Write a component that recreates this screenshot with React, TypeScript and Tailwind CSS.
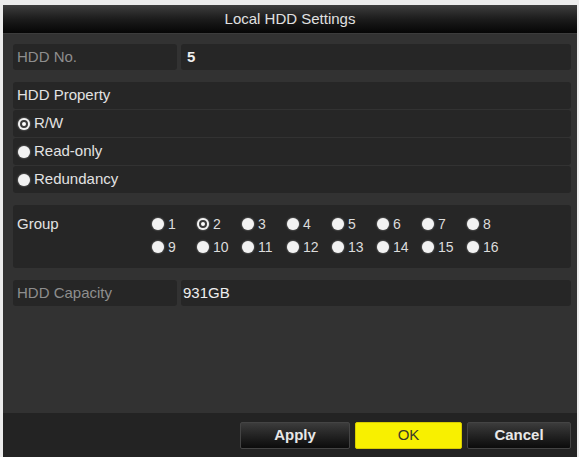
import React from "react";

const font = { fontFamily: '"Liberation Sans", Arial, sans-serif' };

const Radio = ({ checked }: { checked?: boolean }) => (
  <span className="flex h-[12px] w-[12px] shrink-0 items-center justify-center rounded-full bg-[#f2f2f2] shadow-[0_0_2px_rgba(255,255,255,0.6)]">
    {checked ? <span className="h-[8px] w-[8px] rounded-full border-2 border-[#3a3a3a] bg-white" /> : null}
  </span>
);

const Cell = ({ className = "", children }: { className?: string; children?: React.ReactNode }) => (
  <div className={`flex items-center rounded-[3px] bg-[#262626] ${className}`}>{children}</div>
);

const properties = [
  { label: "R/W", checked: true },
  { label: "Read-only", checked: false },
  { label: "Redundancy", checked: false },
];

const groups = Array.from({ length: 16 }, (_, i) => i + 1);

export default function App() {
  return (
    <div className="h-[457px] w-[579px] bg-[#ececec] pl-[3px] pr-[2px] pt-[5px]" style={font}>
      <div className="flex h-full flex-col bg-[#323232]">
        <div className="flex h-[29px] items-center justify-center border-b border-[#3c3c3c] bg-gradient-to-b from-[#3e3e3e] via-[#1c1c1c] to-[#060606] text-[15px] text-[#e0e0e0]">
          Local HDD Settings
        </div>

        <div className="flex flex-1 flex-col pl-[10px] pr-[6px] pt-[10px]">
          <div className="flex h-[26px] gap-[4px]">
            <Cell className="w-[164px] pl-[4px] text-[15px] text-[#8e8e8e]">HDD No.</Cell>
            <Cell className="flex-1 pl-[6px] text-[15px] font-bold text-[#eeeeee]">5</Cell>
          </div>

          <div className="mt-[12px] flex flex-col gap-[1px]">
            <Cell className="h-[27px] pl-[4px] text-[15px] text-[#e2e2e2]">HDD Property</Cell>
            {properties.map((p) => (
              <Cell key={p.label} className="h-[27px] gap-[4px] pl-[5px] text-[15px] text-[#e2e2e2]">
                <Radio checked={p.checked} />
                {p.label}
              </Cell>
            ))}
          </div>

          <Cell className="mt-[12px] h-[63px] items-start pl-[4px] pt-[11px] text-[15px] text-[#e2e2e2]">
            <span className="w-[135px] leading-[16px]">Group</span>
            <div className="grid grid-cols-[repeat(8,45px)] gap-y-[7px]">
              {groups.map((g) => (
                <span key={g} className="flex h-[16px] items-center gap-[4px] text-[14px] text-[#dcdcdc]">
                  <Radio checked={g === 2} />
                  {g}
                </span>
              ))}
            </div>
          </Cell>

          <div className="mt-[12px] flex h-[26px] gap-[4px]">
            <Cell className="w-[164px] pl-[4px] text-[15px] text-[#8e8e8e]">HDD Capacity</Cell>
            <Cell className="flex-1 pl-[2px] text-[15px] text-[#eeeeee]">931GB</Cell>
          </div>
        </div>

        <div className="flex h-[44px] items-center justify-end gap-[5px] bg-[#232323] pr-[6px]">
          <button
            type="button"
            className="h-[27px] w-[110px] rounded-[2px] border border-[#444] bg-gradient-to-b from-[#3c3c3c] to-[#0c0c0c] text-[15px] font-bold text-[#e8e8e8]"
          >
            Apply
          </button>
          <button
            type="button"
            className="h-[27px] w-[107px] rounded-[2px] border border-[#d8cc00] bg-[#f8f000] text-[15px] text-[#3a3a2a]"
          >
            OK
          </button>
          <button
            type="button"
            className="h-[27px] w-[104px] rounded-[2px] border border-[#444] bg-gradient-to-b from-[#3c3c3c] to-[#0c0c0c] text-[15px] font-bold text-[#e8e8e8]"
          >
            Cancel
          </button>
        </div>
      </div>
    </div>
  );
}
